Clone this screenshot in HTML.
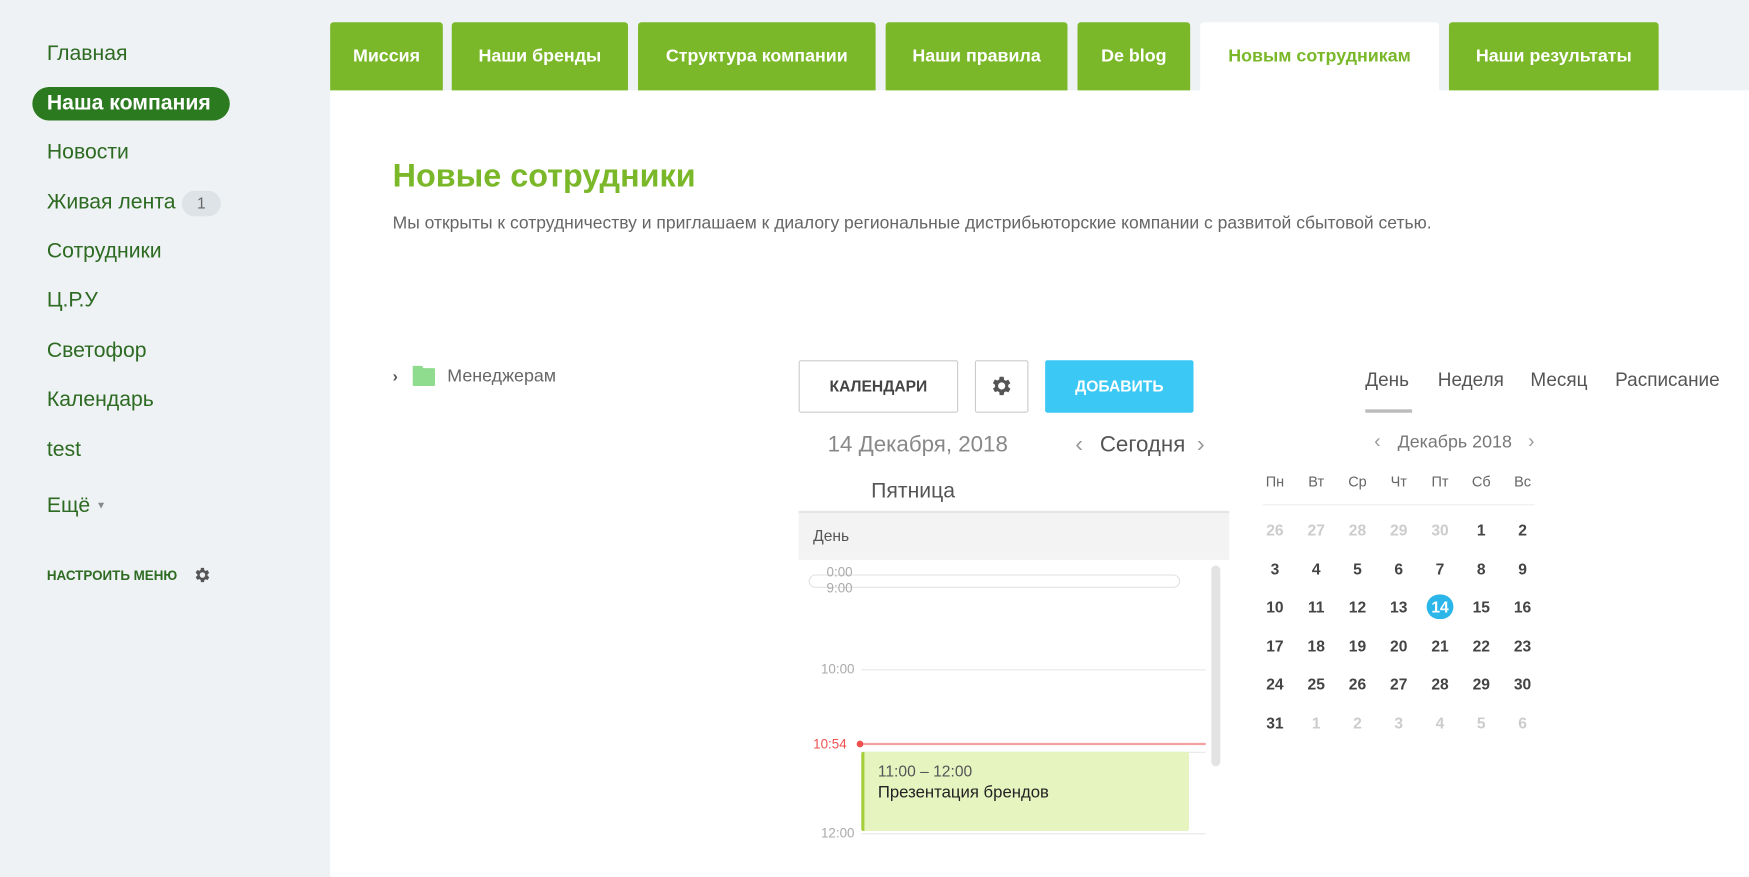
<!DOCTYPE html>
<html><head><meta charset="utf-8"><style>
html,body{margin:0;padding:0;width:1749px;height:877px;overflow:hidden;background:#eef2f4;font-family:"Liberation Sans","DejaVu Sans",sans-serif}
#w{position:absolute;left:0;top:0;width:1568px;height:786px;transform:scale(1.11543);transform-origin:0 0}
.a{position:absolute;white-space:nowrap}
.tab{position:absolute;top:20px;height:61px;background:#7ab829;color:#fff;font-weight:bold;font-size:16px;line-height:61px;text-align:center;border-radius:3px 3px 0 0}
.si{position:absolute;left:42px;font-size:19px;color:#2d6a22;line-height:24px}
.ln{position:absolute;left:772px;width:309px;height:1px;background:#e8e8e8}
.tl{position:absolute;font-size:12px;color:#aaa}
.dn{position:absolute;width:30px;text-align:center;font-size:13px;color:#666}
.d{position:absolute;width:30px;text-align:center;font-size:14px;font-weight:bold;color:#444;line-height:22px}
.g{color:#ccc}
</style></head><body><div id="w">
<div class="a" style="left:296px;top:81px;width:1272px;height:705px;background:#fff"></div>
<div class="tab" style="left:296px;width:101px">Миссия</div>
<div class="tab" style="left:405px;width:158px">Наши бренды</div>
<div class="tab" style="left:572px;width:213px">Структура компании</div>
<div class="tab" style="left:794px;width:163px">Наши правила</div>
<div class="tab" style="left:966px;width:101px">De blog</div>
<div class="tab" style="left:1076px;width:214px;background:#fff;color:#7ab829">Новым сотрудникам</div>
<div class="tab" style="left:1299px;width:188px">Наши результаты</div>

<div class="si" style="top:37px">Главная</div>
<div class="a" style="left:29px;top:78px;width:177px;height:30px;border-radius:15px;background:#2b7a1f"></div>
<div class="si" style="top:81px;color:#fff;font-weight:bold">Наша компания</div>
<div class="si" style="top:125px">Новости</div>
<div class="si" style="top:170px">Живая лента</div>
<div class="a" style="left:163px;top:171px;width:35px;height:23px;border-radius:12px;background:#dde3e6;color:#666;font-size:14px;line-height:23px;text-align:center">1</div>
<div class="si" style="top:214px">Сотрудники</div>
<div class="si" style="top:258px">Ц.Р.У</div>
<div class="si" style="top:303px">Светофор</div>
<div class="si" style="top:347px">Календарь</div>
<div class="si" style="top:392px">test</div>
<div class="si" style="top:441px">Ещё <span style="font-size:9px;color:#888;vertical-align:3px">▼</span></div>
<div class="a" style="left:42px;top:509px;font-size:12px;font-weight:bold;color:#2d6a22">НАСТРОИТЬ МЕНЮ</div>
<svg class="a" style="left:173px;top:507px" width="17" height="17" viewBox="0 0 24 24"><path fill="#555" d="M19.4 13a7.5 7.5 0 000-2l2.1-1.6-2-3.5-2.5 1a7 7 0 00-1.7-1L15 3h-4l-.4 2.7a7 7 0 00-1.7 1l-2.5-1-2 3.5L6.6 11a7.5 7.5 0 000 2l-2.1 1.6 2 3.5 2.5-1a7 7 0 001.7 1L11 21h4l.4-2.7a7 7 0 001.7-1l2.5 1 2-3.5zM13 15.5a3.5 3.5 0 110-7 3.5 3.5 0 010 7z" transform="translate(-1 0)"/></svg>

<div class="a" style="left:352px;top:142px;font-size:29px;font-weight:bold;color:#7ab829">Новые сотрудники</div>
<div class="a" style="left:352px;top:192px;font-size:15.7px;color:#666">Мы открыты к сотрудничеству и приглашаем к диалогу региональные дистрибьюторские компании с развитой сбытовой сетью.</div>

<div class="a" style="left:352px;top:329px;font-size:14px;color:#555;font-weight:bold">›</div>
<div class="a" style="left:370px;top:330px;width:20px;height:16px;background:#8fdc8f;border-radius:1px"></div>
<div class="a" style="left:370px;top:328px;width:9px;height:4px;background:#8fdc8f"></div>
<div class="a" style="left:401px;top:329px;font-size:16px;color:#666">Менеджерам</div>

<div class="a" style="left:716px;top:323px;width:141px;height:45px;border:1px solid #ccc;border-radius:2px;font-size:14px;font-weight:bold;color:#444;text-align:center;line-height:45px">КАЛЕНДАРИ</div>
<div class="a" style="left:874px;top:323px;width:46px;height:45px;border:1px solid #ccc;border-radius:2px"></div>
<svg class="a" style="left:887px;top:335px" width="22" height="22" viewBox="0 0 24 24"><path fill="#555" d="M19.4 13a7.5 7.5 0 000-2l2.1-1.6-2-3.5-2.5 1a7 7 0 00-1.7-1L15 3h-4l-.4 2.7a7 7 0 00-1.7 1l-2.5-1-2 3.5L6.6 11a7.5 7.5 0 000 2l-2.1 1.6 2 3.5 2.5-1a7 7 0 001.7 1L11 21h4l.4-2.7a7 7 0 001.7-1l2.5 1 2-3.5zM13 15.5a3.5 3.5 0 110-7 3.5 3.5 0 010 7z" transform="translate(-1 0)"/></svg>
<div class="a" style="left:937px;top:323px;width:133px;height:47px;background:#3bc8f5;border-radius:2px;font-size:14px;font-weight:bold;color:#fff;text-align:center;line-height:47px">ДОБАВИТЬ</div>

<div class="a" style="left:1224px;top:331px;font-size:17px;color:#555">День</div>
<div class="a" style="left:1224px;top:367px;width:42px;height:3px;background:#bbb"></div>
<div class="a" style="left:1289px;top:331px;font-size:17px;color:#555">Неделя</div>
<div class="a" style="left:1372px;top:331px;font-size:17px;color:#555">Месяц</div>
<div class="a" style="left:1448px;top:331px;font-size:17px;color:#555">Расписание</div>

<div class="a" style="left:742px;top:388px;font-size:20px;color:#888">14 Декабря, 2018</div>
<div class="a" style="left:964px;top:387px;font-size:21px;color:#999">‹</div>
<div class="a" style="left:986px;top:388px;font-size:20px;color:#555">Сегодня</div>
<div class="a" style="left:1073px;top:387px;font-size:21px;color:#999">›</div>
<div class="a" style="left:781px;top:430px;font-size:19px;color:#555">Пятница</div>

<div class="a" style="left:716px;top:458px;width:386px;height:42px;background:#f3f3f3;border-top:2px solid #e6e6e6"></div>
<div class="a" style="left:729px;top:472px;font-size:14px;color:#555">День</div>
<div class="a" style="left:725px;top:515px;width:331px;height:10px;border:1px solid #e2e2e2;border-radius:6px"></div>
<div class="tl" style="left:741px;top:506px">0:00</div>
<div class="tl" style="left:741px;top:520px">9:00</div>
<div class="ln" style="top:600px"></div><div class="tl" style="left:736px;top:593px">10:00</div>
<div class="ln" style="top:674px"></div>
<div class="ln" style="top:747px"></div><div class="tl" style="left:736px;top:740px">12:00</div>
<div class="a" style="left:1086px;top:507px;width:8px;height:180px;background:#e3e3e3;border-radius:4px"></div>
<div class="a" style="left:772px;top:666px;width:309px;height:2px;background:#f2a0a0"></div>
<div class="a" style="left:768px;top:664px;width:6px;height:6px;border-radius:3px;background:#f05050"></div>
<div class="tl" style="left:729px;top:660px;color:#f05050">10:54</div>
<div class="a" style="left:772px;top:674px;width:291px;height:71px;background:#e6f4c0;border-left:3px solid #a5cf3a;border-radius:2px"></div>
<div class="a" style="left:787px;top:683px;font-size:14px;color:#555">11:00 – 12:00</div>
<div class="a" style="left:787px;top:702px;font-size:15px;color:#222">Презентация брендов</div>

<div class="a" style="left:1232px;top:386px;font-size:17px;color:#999">‹</div>
<div class="a" style="left:1253px;top:388px;font-size:16px;color:#777">Декабрь 2018</div>
<div class="a" style="left:1370px;top:386px;font-size:17px;color:#999">›</div>
<div class="dn" style="left:1128px;top:424px">Пн</div><div class="dn" style="left:1165px;top:424px">Вт</div><div class="dn" style="left:1202px;top:424px">Ср</div><div class="dn" style="left:1239px;top:424px">Чт</div><div class="dn" style="left:1276px;top:424px">Пт</div><div class="dn" style="left:1313px;top:424px">Сб</div><div class="dn" style="left:1350px;top:424px">Вс</div>
<div class="a" style="left:1132px;top:452px;width:244px;height:1px;background:#eee"></div>
<div class="a" style="left:1279px;top:533px;width:24px;height:22px;border-radius:11px;background:#2bb6ea"></div>
<div id="cal"></div>
<script>
var rows=[[26,27,28,29,30,1,2],[3,4,5,6,7,8,9],[10,11,12,13,14,15,16],[17,18,19,20,21,22,23],[24,25,26,27,28,29,30],[31,1,2,3,4,5,6]];
var ys=[475,510,544,579,613,648],h='';
rows.forEach(function(r,i){r.forEach(function(n,j){var g=(i==0&&j<5)||(i==5&&j>0);var s=(i==2&&j==4)?'color:#fff':'';h+='<div class="d'+(g?' g':'')+'" style="left:'+(1128+37*j)+'px;top:'+(ys[i]-11)+'px;'+s+'">'+n+'</div>';});});
document.getElementById('cal').innerHTML=h;
</script>
</div></body></html>
